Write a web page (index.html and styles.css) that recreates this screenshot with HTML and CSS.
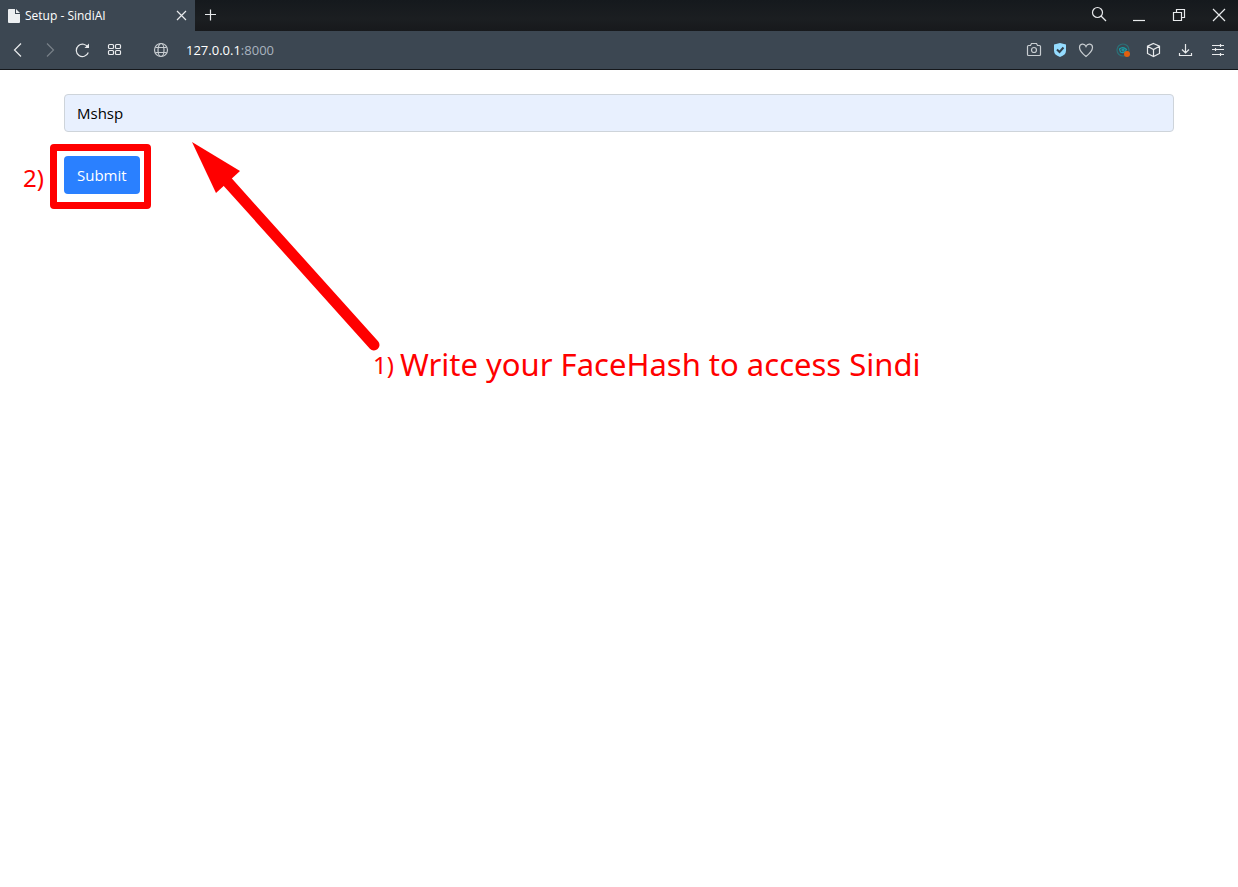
FILE: index.html
```html
<!DOCTYPE html>
<html lang="en">
<head>
<meta charset="utf-8">
<title>Setup - SindiAI</title>
<link rel="stylesheet" href="styles.css">
</head>
<body>
<header class="browser">
  <div class="titlebar">
    <div class="tab">
      <svg class="tab-icon" viewBox="0 0 12 14"><path d="M1 0H7V5H12V13Q12 14 11 14H1Q0 14 0 13V1Q0 0 1 0ZM8 0L12 4H8Z"/></svg>
      <span class="tab-title">Setup - SindiAI</span>
      <button class="tab-close" aria-label="Close tab"><svg class="icon" viewBox="0 0 20 20"><path d="M6 5L15 14M15 5L6 14"/></svg></button>
    </div>
    <button class="new-tab" aria-label="New tab"><svg class="icon" viewBox="0 0 20 20"><path d="M10.500 3.500V14.500M5 8.500H16"/></svg></button>
    <div class="window-controls">
      <button aria-label="Search"><svg class="icon" viewBox="0 0 20 20"><circle cx="9.500" cy="6.500" r="5"/><path d="M13 10L18 15"/></svg></button>
      <button aria-label="Minimize"><svg class="icon" viewBox="0 0 20 20"><path d="M5 14.500H17"/></svg></button>
      <button aria-label="Restore"><svg class="icon" viewBox="0 0 20 20"><path d="M5.500 6.500H13.500V14.500H5.500ZM8.500 6.500V3.500H16.500V11.500H13.500"/></svg></button>
      <button aria-label="Close"><svg class="icon" viewBox="0 0 20 20"><path d="M5 3L17 15M17 3L5 15"/></svg></button>
    </div>
  </div>
  <div class="toolbar">
    <nav class="nav-buttons">
      <button aria-label="Back"><svg class="icon" viewBox="0 0 20 20"><path d="M13 3.500L6.500 10L13 16.500"/></svg></button>
      <button class="disabled" aria-label="Forward" disabled><svg class="icon" viewBox="0 0 20 20"><path d="M7 3.500L13.500 10L7 16.500"/></svg></button>
      <button aria-label="Reload"><svg class="icon" viewBox="0 0 20 20"><path d="M16 7.500A6.200 6.200 0 1 0 16.300 12.500"/><path class="solid" d="M17 3.500V8H12.500Z"/></svg></button>
      <button aria-label="Speed dial"><svg class="icon" viewBox="0 0 20 20"><rect x="4.500" y="4.500" width="5" height="4" rx="1"/><rect x="11.500" y="4.500" width="5" height="4" rx="1"/><rect x="4.500" y="10.500" width="5" height="4" rx="1"/><rect x="11.500" y="10.500" width="5" height="4" rx="1"/></svg></button>
    </nav>
    <div class="address">
      <svg class="icon soft" viewBox="0 0 20 20"><circle cx="10" cy="10" r="6.500"/><ellipse cx="10" cy="10" rx="3" ry="6.500"/><path d="M4.500 7.500H15.500M4.500 12.500H15.500"/></svg>
      <span class="url">127.0.0.1<span class="port">:8000</span></span>
    </div>
    <div class="page-actions">
      <button aria-label="Snapshot"><svg class="icon soft" viewBox="0 0 20 20"><path d="M3.500 6.500Q3.500 5.500 4.500 5.500H6.500L7.500 3.500H12.500L13.500 5.500H15.500Q16.500 5.500 16.500 6.500V14.500Q16.500 15.500 15.500 15.500H4.500Q3.500 15.500 3.500 14.500Z"/><circle cx="10" cy="10" r="2.500"/></svg></button>
      <button aria-label="Ad blocker"><svg class="icon" viewBox="0 0 20 20"><path class="shield" d="M10 3L16 4.500V10.500Q16 15 10 17Q4 15 4 10.500V4.500Z"/><path class="check" d="M7 9.500L9.500 12L13.500 7.500"/></svg></button>
      <button aria-label="Bookmark"><svg class="icon soft" viewBox="0 0 20 20"><path d="M10 16.500C7.500 14.500 3.500 11 3.500 7.500C3.500 3.500 8.500 3 10 6.500C11.500 3 16.500 3.500 16.500 7.500C16.500 11 12.500 14.500 10 16.500Z"/></svg></button>
    </div>
    <div class="extensions">
      <button aria-label="Extension"><svg class="icon" viewBox="0 0 20 20"><circle class="teal-dim" cx="11" cy="10" r="6"/><path class="teal" d="M7.500 9Q11 6 14.500 9.500Q12 14 8.500 12Z"/><circle class="teal" cx="11" cy="10" r="1"/><circle class="alert" cx="15" cy="14" r="3"/></svg></button>
      <button aria-label="Extensions"><svg class="icon" viewBox="0 0 20 20"><path d="M9.500 3.500L15.500 6.200V13.500L9.500 16.500L3.500 13.500V6.200ZM3.500 6.200L9.500 9.500L15.500 6.200M9.500 9.500V16.500"/></svg></button>
      <button aria-label="Downloads"><svg class="icon" viewBox="0 0 20 20"><path d="M9.500 4V12.500M6 9.500L9.500 13L13 9.500M3.500 13V15.500H15.500V13"/></svg></button>
      <button aria-label="Easy setup"><svg class="icon" viewBox="0 0 20 20"><path d="M4 5.500H16M4 9.500H16M4 14.500H16M12.500 4V7M7.500 8V11M12.500 13V16"/></svg></button>
    </div>
  </div>
</header>
<main class="page">
  <form class="setup" onsubmit="return false">
    <input class="field" type="text" value="Mshsp" aria-label="FaceHash">
    <button class="submit" type="submit">Submit</button>
  </form>
  <div class="highlight"></div>
  <span class="note step-two">2)</span>
  <svg class="arrow" viewBox="0 0 190 210"><path class="shaft" d="M32 36L182 203"/><path class="head" d="M0 0L48 29L24 51Z"/></svg>
  <p class="note step-one"><span class="number">1)</span><span class="message">Write your FaceHash to access Sindi</span></p>
</main>
</body>
</html>
```
FILE: styles.css
```css
* {
  box-sizing: border-box;
}

body {
  margin: 0;
  min-height: 100vh;
  background: #fff;
  font-family: "Open Sans", "Noto Sans", sans-serif;
}

button {
  padding: 0;
  border: 0;
  background: none;
  color: inherit;
  font: inherit;
}

.browser {
  border-bottom: 1px solid #15181c;
  background: #3c4752;
  color: #f1f3f4;
}

.titlebar {
  display: flex;
  height: 31px;
  background: linear-gradient(#15191d, #1b1e21 60%, #17191c);
}

.tab {
  display: flex;
  align-items: center;
  width: 195px;
  padding: 0 4px 0 8px;
  background: #3c4752;
}

.tab-icon {
  width: 12px;
  height: 14px;
  margin-right: 5px;
  fill: #eceff1;
}

.tab-title {
  flex: 1;
  color: #fff;
  font-family: "Open Sans", sans-serif;
  font-size: 12px;
  white-space: nowrap;
}

.icon {
  display: block;
  width: 20px;
  height: 20px;
  fill: none;
  stroke: #e8eaec;
  stroke-width: 1.2;
}

.soft {
  stroke: #c8cdd1;
}

.new-tab {
  width: 30px;
  padding-left: 5px;
}

.window-controls {
  display: flex;
  margin-left: auto;
}

.window-controls button {
  display: grid;
  place-items: center;
  width: 40px;
}

.toolbar {
  display: flex;
  align-items: center;
  height: 38px;
  padding: 0 4px 0 2px;
}

.toolbar button {
  display: grid;
  place-items: center;
  width: 32px;
  height: 32px;
}

.nav-buttons,
.page-actions,
.extensions {
  display: flex;
}

.disabled {
  opacity: 0.35;
}

.address {
  display: flex;
  flex: 1;
  align-items: center;
  gap: 15px;
  padding-left: 21px;
}

.url {
  color: #fff;
  font-size: 13px;
}

.port {
  color: #a9b3bf;
}

.page-actions {
  margin-right: 7px;
}

.toolbar .page-actions button {
  width: 26px;
}

.solid {
  fill: #e8eaec;
  stroke: none;
}

.shield {
  fill: #95dcff;
  stroke: none;
}

.check {
  stroke: #33424f;
  stroke-width: 2;
}

.teal-dim {
  stroke: #2c7077;
}

.teal {
  stroke: #19a0a8;
}

.alert {
  fill: #e2600f;
  stroke: none;
}

.page {
  position: relative;
  padding: 24px 64px;
}

.setup {
  display: flex;
  flex-direction: column;
  align-items: flex-start;
  gap: 24px;
}

.field {
  width: 100%;
  height: 38px;
  padding: 6px 12px;
  border: 1px solid #ced4da;
  border-radius: 4px;
  background: #e8f0fe;
  color: #000;
  font: 15px/24px "Open Sans", sans-serif;
}

.submit {
  height: 38px;
  padding: 0 13px;
  border-radius: 4px;
  background: #2a80ff;
  color: #fff;
  font-size: 15px;
}

.highlight {
  position: absolute;
  top: 74px;
  left: 50px;
  width: 101px;
  height: 65px;
  border: 7px solid #f00;
  border-radius: 4px;
  pointer-events: none;
}

.note {
  position: absolute;
  margin: 0;
  color: #f00;
  font-family: "Noto Sans", sans-serif;
  white-space: nowrap;
}

.step-two {
  top: 91px;
  left: 23px;
  font-size: 24px;
}

.arrow {
  position: absolute;
  top: 72px;
  left: 192px;
  width: 190px;
  height: 210px;
}

.shaft {
  fill: none;
  stroke: #f00;
  stroke-width: 11;
  stroke-linecap: round;
}

.head {
  fill: #f00;
}

.step-one {
  display: flex;
  align-items: center;
  gap: 6px;
  top: 273px;
  left: 373px;
}

.number {
  font-size: 24px;
}

.message {
  font-size: 31px;
}
```
